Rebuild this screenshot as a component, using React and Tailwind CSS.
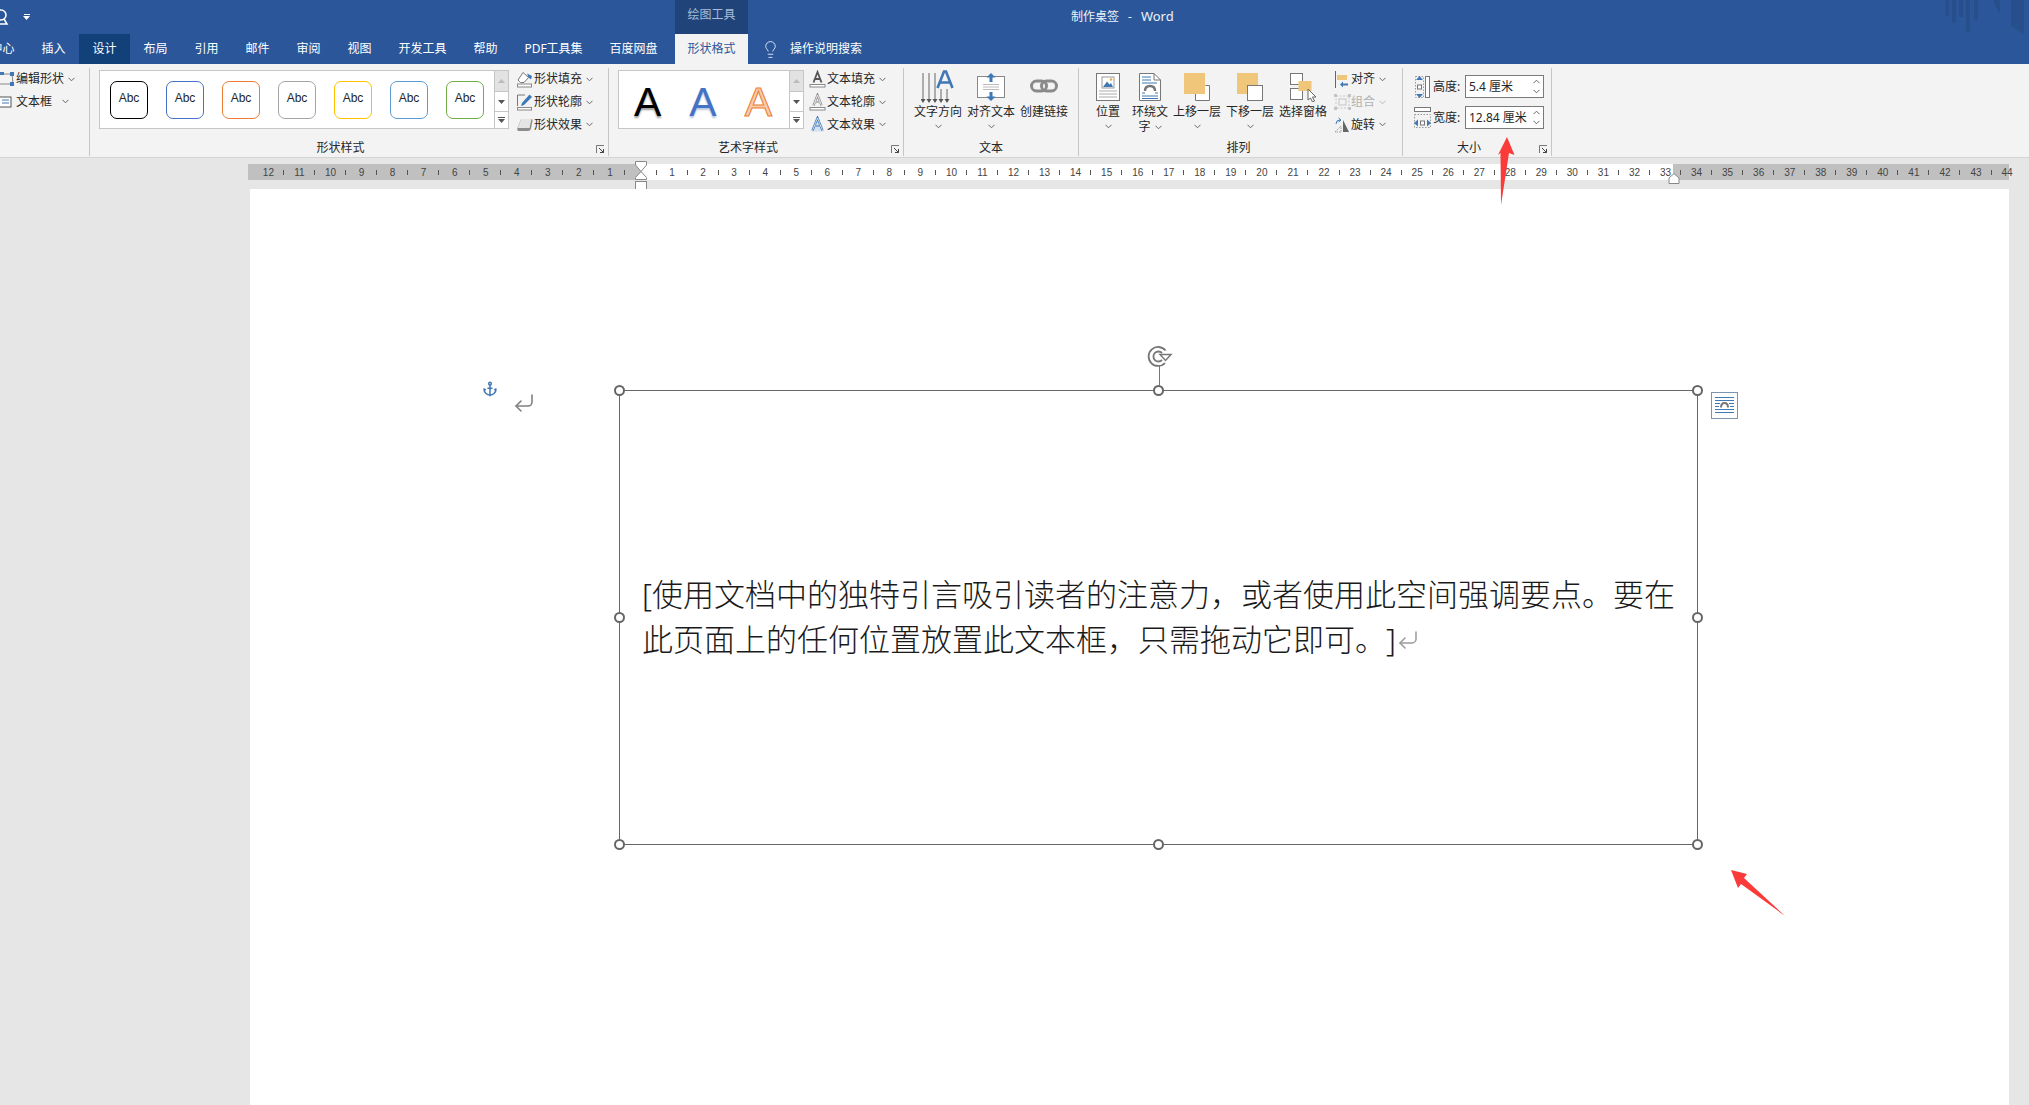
import { Anchor, CornerDownLeft, Lightbulb } from 'lucide-react'

const tabs = [
  { label: '中心', w: 'w-[51px]' },
  { label: '插入', w: 'w-[51px]' },
  { label: '设计', w: 'w-[51px]', active: true },
  { label: '布局', w: 'w-[51px]' },
  { label: '引用', w: 'w-[51px]' },
  { label: '邮件', w: 'w-[51px]' },
  { label: '审阅', w: 'w-[51px]' },
  { label: '视图', w: 'w-[51px]' },
  { label: '开发工具', w: 'w-[75px]' },
  { label: '帮助', w: 'w-[51px]' },
  { label: 'PDF工具集', w: 'w-[85px]' },
  { label: '百度网盘', w: 'w-[75px]' },
]

const shapeColors = ['border-black', 'border-[#4472c4]', 'border-[#ed7d31]', 'border-[#a5a5a5]', 'border-[#ffc000]', 'border-[#5b9bd5]', 'border-[#70ad47]']

const cm = Array.from({ length: 57 }, (_, i) => i - 12)

function Chevron({ className = '' }) {
  return (
    <svg width="7" height="5" viewBox="0 0 7 5" className={className}>
      <polyline points="0.5,0.8 3.5,3.8 6.5,0.8" fill="none" stroke="#666" strokeWidth="1" />
    </svg>
  )
}

function Launcher({ className = '' }) {
  return (
    <svg width="9" height="9" viewBox="0 0 9 9" className={`absolute ${className}`}>
      <path d="M0.5 8V0.5H8" fill="none" stroke="#777" />
      <path d="M3 3L7.5 7.5M7.5 4V7.5H4" fill="none" stroke="#444" />
    </svg>
  )
}

function Triangle({ up, color = '#555' }) {
  return (
    <svg width="7" height="4" viewBox="0 0 7 4">
      <polygon points={up ? '0,4 7,4 3.5,0' : '0,0 7,0 3.5,4'} fill={color} />
    </svg>
  )
}

function GalleryScroll() {
  return (
    <div className="w-[14px] h-full border-l border-[#c6c6c6] flex flex-col">
      <div className="h-[21px] bg-[#e2e2e2] flex items-center justify-center border-b border-[#c6c6c6]"><Triangle up color="#bbb" /></div>
      <div className="h-[20px] flex items-center justify-center border-b border-[#c6c6c6]"><Triangle /></div>
      <div className="flex-1 flex flex-col items-center justify-center gap-px">
        <div className="w-[7px] h-px bg-[#555]" />
        <Triangle />
      </div>
    </div>
  )
}

function MenuRow({ icon, label, disabled }) {
  return (
    <div className="h-[22.7px] flex items-center">
      <span className="w-[18px] h-[18px] flex items-center justify-center shrink-0">{icon}</span>
      <span className={`whitespace-nowrap ${disabled ? 'text-[#b1b1b1]' : ''}`}>{label}</span>
      <Chevron className={`ml-[4px] shrink-0 ${disabled ? 'opacity-40' : ''}`} />
    </div>
  )
}

function BigButton({ icon, w, children, chevron = true }) {
  return (
    <div className={`${w} flex flex-col items-center shrink-0`}>
      <div className="h-[34px] mt-[2px] flex items-center justify-center">{icon}</div>
      <div className="h-[16px] leading-[16px] whitespace-nowrap">{children}</div>
      {chevron && <div className="h-[13px] flex items-center"><Chevron /></div>}
    </div>
  )
}

function Group({ w, label, labelClass = '', className = '', launcher, children }) {
  return (
    <div className={`${w} relative my-1 h-[88px] border-r border-[#c6c6c6] shrink-0`}>
      <div className={`h-[72px] flex ${className}`}>{children}</div>
      <div className={`h-[16px] leading-[16px] text-center ${labelClass}`}>{label}</div>
      {launcher && <Launcher className="right-[3px] bottom-[2px]" />}
    </div>
  )
}

function FillIcon() {
  return (
    <svg width="18" height="17" viewBox="0 0 18 17">
      <rect x="1.5" y="13" width="14" height="3" fill="#fff" stroke="#888" />
      <path d="M7 1.5L12.5 6.5L8 11.5H4.5L2 9Z" fill="#fff" stroke="#777" />
      <path d="M11 2.5L16 5L15 8.5L12.5 6.5Z" fill="#3c78b5" />
    </svg>
  )
}

function OutlineIcon() {
  return (
    <svg width="18" height="18" viewBox="0 0 18 18">
      <path d="M9 2H1.5V13" fill="none" stroke="#777" />
      <rect x="1.5" y="14.5" width="14" height="2.5" fill="#fff" stroke="#888" />
      <path d="M13.5 1.5L16 4L8 12L5 13L6 10Z" fill="#3c78b5" />
    </svg>
  )
}

function EffectIcon() {
  return (
    <svg width="18" height="16" viewBox="0 0 18 16">
      <path d="M5 2H15.5Q17 2 16.5 4L15 11.5Q14.5 14 12 14H3Q0.5 14 1.5 11Z" fill="#8c8c8c" />
      <path d="M5 2H15.5L13.5 11H1.8Z" fill="#e4e4e4" />
    </svg>
  )
}

// the A of the three text menu rows: fill, outline, effect
function TextAIcon({ kind }) {
  const a = 'M4.5 12.5L8.5 2L12.5 12.5M5.8 9H11.2'
  if (kind === 'effect') {
    return (
      <svg width="18" height="18" viewBox="0 0 18 18">
        <path d="M2 15.5L8.5 1.5L15 15.5Z" fill="#d3e2f1" />
        <path d="M3.5 14.5L8.5 2L13.5 14.5M5.2 10H11.8" fill="none" stroke="#3f78b5" strokeWidth="2.2" />
        <path d="M3.5 14.5L8.5 2L13.5 14.5M5.2 10H11.8" fill="none" stroke="#fff" strokeWidth="0.7" />
      </svg>
    )
  }
  return (
    <svg width="18" height="18" viewBox="0 0 18 18">
      <path d={a} fill="none" stroke={kind === 'fill' ? '#555' : '#888'} strokeWidth={kind === 'fill' ? 1.8 : 2.2} />
      {kind === 'outline' && <path d={a} fill="none" stroke="#fff" strokeWidth="0.8" />}
      <rect x="1" y="14.5" width="15" height="2.5" fill="#fff" stroke="#888" />
    </svg>
  )
}

function DirectionIcon() {
  return (
    <svg width="34" height="34" viewBox="0 0 34 34">
      {[2, 8, 14, 20, 26].map((x, i) => (
        <g key={x}>
          <line x1={x} y1={i > 2 ? 19 : 3} x2={x} y2={31} stroke="#666" />
          <polygon points={`${x - 2.5},29 ${x + 2.5},29 ${x},33`} fill="#555" />
        </g>
      ))}
      <path d="M16.5 18L23 1.5H25L31.5 18M19 12.5H29" fill="none" stroke="#3f78b5" strokeWidth="2.6" />
    </svg>
  )
}

function AlignIcon() {
  return (
    <svg width="28" height="28" viewBox="0 0 28 28">
      <rect x="0.5" y="3.5" width="27" height="21" fill="#fff" stroke="#888" />
      <rect x="7" y="0" width="14" height="3" fill="#f3f3f3" />
      <rect x="7" y="25" width="14" height="3" fill="#f3f3f3" />
      <path d="M6 11.5H22M6 14H22M6 16.5H22" stroke="#bbb" />
      <path d="M14 0L18.5 4.5H15.5V9H12.5V4.5H9.5ZM14 28L18.5 23.5H15.5V19H12.5V23.5H9.5Z" fill="#3f78b5" />
    </svg>
  )
}

function LinkIcon() {
  return (
    <svg width="28" height="16" viewBox="0 0 28 16">
      <rect x="1.5" y="2" width="15" height="10" rx="5" fill="none" stroke="#8a8a8a" strokeWidth="3" />
      <rect x="11.5" y="2" width="15" height="10" rx="5" fill="none" stroke="#8a8a8a" strokeWidth="3" />
    </svg>
  )
}

function PositionIcon() {
  return (
    <svg width="24" height="28" viewBox="0 0 24 28">
      <rect x="0.5" y="0.5" width="23" height="27" fill="#fff" stroke="#777" />
      <rect x="6" y="4" width="12" height="11" fill="#fff" stroke="#999" />
      <path d="M7 14L11 8.5L13.5 11.5L15 10L17 14Z" fill="#3f78b5" />
      <circle cx="15" cy="6.5" r="1.2" fill="#eba83a" />
      <path d="M3 18H21M3 21H21M3 24H21" stroke="#aaa" />
    </svg>
  )
}

function WrapIcon() {
  return (
    <svg width="22" height="28" viewBox="0 0 22 28">
      <path d="M0.5 0.5H15L21.5 7V27.5H0.5Z" fill="#fff" stroke="#777" />
      <path d="M15 0.5V7H21.5" fill="none" stroke="#777" />
      <path d="M3 4H12M3 7H12M3 10H18M3 20H6M16 20H19M3 23H19M3 25.5H19" stroke="#3f78b5" />
      <path d="M6 18Q6 13 11 13Q16 13 16 18" fill="none" stroke="#777" strokeWidth="2.5" />
    </svg>
  )
}

function ForwardIcon() {
  return (
    <svg width="26" height="28" viewBox="0 0 26 28">
      <path d="M21.5 12.5H25.5V27.5H11.5V21" fill="#fff" stroke="#777" />
      <rect x="0" y="0" width="21" height="21" fill="#efc67a" />
    </svg>
  )
}

function BackwardIcon() {
  return (
    <svg width="26" height="28" viewBox="0 0 26 28">
      <rect x="0" y="0" width="21" height="21" fill="#efc67a" />
      <rect x="10.5" y="12.5" width="15" height="15" fill="#fff" stroke="#777" />
    </svg>
  )
}

function PaneIcon() {
  return (
    <svg width="27" height="29" viewBox="0 0 27 29">
      <rect x="0.5" y="0.5" width="12" height="11" fill="#fff" stroke="#777" />
      <rect x="0.5" y="15.5" width="12" height="11" fill="#fff" stroke="#777" />
      <rect x="8.5" y="8" width="13" height="10" fill="#efc67a" />
      <path d="M18 16V27L20.5 25L22.5 29L24.5 28L22.5 24H26Z" fill="#fff" stroke="#666" />
    </svg>
  )
}

function AlignMenuIcon() {
  return (
    <svg width="14" height="17" viewBox="0 0 14 17">
      <line x1="0.5" y1="0" x2="0.5" y2="17" stroke="#666" />
      <rect x="2" y="4" width="10" height="5" fill="#efc67a" />
      <path d="M5 13.5L8 10.5V12.5H13V14.5H8V16.5Z" fill="#3f78b5" />
    </svg>
  )
}

function GroupIcon() {
  return (
    <svg width="17" height="16" viewBox="0 0 17 16">
      <rect x="2" y="2" width="13" height="12" fill="none" stroke="#c4c4c4" strokeDasharray="2 1.5" />
      <rect x="5" y="5" width="7" height="6" fill="none" stroke="#c4c4c4" />
      {[[0, 0], [14, 0], [0, 13], [14, 13]].map(([x, y]) => <rect key={`${x}${y}`} x={x} y={y} width="3" height="3" fill="#c4c4c4" />)}
    </svg>
  )
}

function RotateIcon() {
  return (
    <svg width="17" height="16" viewBox="0 0 17 16">
      <path d="M1 15L7 9V15Z" fill="none" stroke="#999" strokeDasharray="1.5 1" />
      <path d="M9 15V3L15 15Z" fill="#666" />
      <path d="M2 7Q2 3 6 3M4.5 1L7 3L4.5 5" fill="none" stroke="#3f78b5" />
    </svg>
  )
}

function HeightIcon() {
  return (
    <svg width="17" height="22" viewBox="0 0 17 22">
      <rect x="11.5" y="0.5" width="4" height="21" fill="#fff" stroke="#777" />
      <rect x="1.5" y="0.5" width="8" height="21" fill="none" stroke="#999" strokeDasharray="1.5 1.5" />
      <path d="M5.5 0L9 4H2ZM5.5 22L9 18H2Z" fill="#3f78b5" />
      <rect x="3.5" y="9" width="4" height="4" fill="#fff" stroke="#777" />
    </svg>
  )
}

function WidthIcon() {
  return (
    <svg width="17" height="22" viewBox="0 0 17 22">
      <rect x="0.5" y="0.5" width="16" height="4" fill="#fff" stroke="#777" />
      <rect x="0.5" y="7.5" width="16" height="13" fill="none" stroke="#999" strokeDasharray="1.5 1.5" />
      <path d="M0 16L4 12.5V19.5ZM17 16L13 12.5V19.5Z" fill="#3f78b5" />
      <rect x="6.5" y="14" width="4" height="4" fill="#fff" stroke="#777" />
    </svg>
  )
}

function SizeField({ icon, label, value }) {
  return (
    <div className="h-[23px] flex items-center">
      <span className="w-[17px] h-[22px] shrink-0">{icon}</span>
      <span className="ml-[2px] w-[32px] shrink-0 whitespace-nowrap">{label}</span>
      <div className="w-[79px] h-[23px] bg-white border border-[#7a7a7a] flex items-center pl-[3px]">
        <span className="whitespace-nowrap">{value}</span>
        <div className="ml-auto mr-[3px] flex flex-col gap-[5px]">
          <Chevron className="rotate-180" />
          <Chevron />
        </div>
      </div>
    </div>
  )
}

function Handle({ className }) {
  return <span className={`absolute w-[11px] h-[11px] rounded-full bg-white border-2 border-[#666] ${className}`} />
}

export default function App() {
  return (
    <div className="w-[2029px] h-[1105px] overflow-hidden bg-[#e6e6e6] text-[12px] text-[#262626] font-['Noto_Sans','Noto_Sans_CJK_SC',sans-serif]">
      {/* title bar */}
      <div className="relative h-[34px] bg-[#2b579a] flex">
        <div className="w-[675px] h-full relative">
          <svg width="12" height="18" viewBox="0 0 12 18" className="absolute left-[-3px] top-[9px]">
            <circle cx="4" cy="6" r="5" fill="none" stroke="#fff" strokeWidth="1.5" />
            <path d="M7 10L10 15H0" fill="none" stroke="#fff" strokeWidth="1.5" />
          </svg>
          <div className="absolute left-[23px] top-[14px] flex flex-col items-center gap-px">
            <div className="w-[6px] h-px bg-white" />
            <Triangle color="#fff" />
          </div>
        </div>
        <div className="w-[73px] h-full bg-[#204479] text-[#a9bcd6] flex items-center justify-center pb-[4px]">绘图工具</div>
        <div className="ml-[323px] h-full flex items-center pb-[1px] text-[#eef2f8] whitespace-nowrap">
          <span>制作桌签</span>
          <span className="mx-[9px]">-</span>
          <span className="text-[13px]">Word</span>
        </div>
        <svg width="99" height="40" viewBox="0 0 99 40" className="absolute right-0 top-0">
          <g fill="#274f8c">
            <rect x="15" y="0" width="4" height="16" />
            <rect x="22" y="0" width="4" height="23" />
            <rect x="29" y="0" width="4" height="17" />
            <rect x="36" y="0" width="4" height="32" />
            <rect x="44" y="0" width="4" height="20" />
            <polygon points="64,0 70,0 70,14 64,4" />
            <polygon points="81,0 94,0 94,34 81,26" />
          </g>
        </svg>
      </div>

      {/* tabs */}
      <div className="h-[30px] bg-[#2b579a] flex text-white overflow-hidden">
        <div className="ml-[-23px] flex">
          {tabs.map(tab => (
            <div key={tab.label} className={`${tab.w} h-full flex items-center justify-center whitespace-nowrap ${tab.active ? 'bg-[#124078]' : ''}`}>{tab.label}</div>
          ))}
        </div>
        <div className="ml-[4px] w-[73px] h-full bg-[#f3f3f3] text-[#2b579a] flex items-center justify-center">形状格式</div>
        <Lightbulb size={19} strokeWidth={1} className="ml-[13px] self-center" />
        <span className="ml-[10px] self-center whitespace-nowrap">操作说明搜索</span>
      </div>

      {/* ribbon */}
      <div className="h-[94px] bg-[#f3f3f3] border-b border-[#d4d4d4] flex">
        <Group w="w-[90px]" label="" className="flex-col">
          <div className="h-[22.5px] flex items-center">
            <svg width="16" height="16" viewBox="0 0 16 16" className="shrink-0">
              <path d="M0 3H12L13 13H0" fill="none" stroke="#888" />
              <rect x="0" y="1" width="4" height="3" fill="#3f78b5" />
              <rect x="10" y="1" width="4" height="4" fill="#3f78b5" />
              <rect x="10" y="11" width="4" height="4" fill="#3f78b5" />
            </svg>
            <span className="whitespace-nowrap">编辑形状</span>
            <Chevron className="ml-[4px]" />
          </div>
          <div className="h-[22.5px] flex items-center">
            <svg width="16" height="14" viewBox="0 0 16 14" className="shrink-0">
              <rect x="-2" y="2" width="13" height="10" fill="#fff" stroke="#555" />
              <path d="M2 5H9M2 8H9" stroke="#3f78b5" />
            </svg>
            <span className="whitespace-nowrap">文本框</span>
            <Chevron className="ml-[10px]" />
          </div>
        </Group>

        <Group w="w-[519px]" label="形状样式" labelClass="pr-[17px]" className="pl-[9px]" launcher>
          <div className="mt-[2px] w-[410px] h-[59px] bg-white border border-[#c6c6c6] flex">
            <div className="flex-1 flex items-center pl-[10px] gap-[18px]">
              {shapeColors.map(color => (
                <div key={color} className={`w-[38px] h-[38px] rounded-[7px] border ${color} flex items-center justify-center pb-[3px] text-[12px] font-['Liberation_Sans',sans-serif]`}>Abc</div>
              ))}
            </div>
            <GalleryScroll />
          </div>
          <div className="ml-[7px] flex flex-col">
            <MenuRow icon={<FillIcon />} label="形状填充" />
            <MenuRow icon={<OutlineIcon />} label="形状轮廓" />
            <MenuRow icon={<EffectIcon />} label="形状效果" />
          </div>
        </Group>

        <Group w="w-[295px]" label="艺术字样式" labelClass="pr-[16px]" className="pl-[9px]" launcher>
          <div className="mt-[2px] w-[186px] h-[59px] bg-white border border-[#c6c6c6] flex">
            <div className="flex-1 flex items-center justify-around pl-px pr-[3px] pt-[6px] text-[41px] font-['Liberation_Sans',sans-serif]">
              <span className="text-black [text-shadow:0_2px_2px_#9a9a9a]">A</span>
              <span className="text-[#4472c4] [text-shadow:0_2px_2px_#b9c6e0]">A</span>
              <span className="text-[#f8cbad] [-webkit-text-stroke:1px_#ed7d31]">A</span>
            </div>
            <GalleryScroll />
          </div>
          <div className="ml-[5px] flex flex-col">
            <MenuRow icon={<TextAIcon kind="fill" />} label="文本填充" />
            <MenuRow icon={<TextAIcon kind="outline" />} label="文本轮廓" />
            <MenuRow icon={<TextAIcon kind="effect" />} label="文本效果" />
          </div>
        </Group>

        <Group w="w-[175px]" label="文本" className="pl-[7.5px]">
          <BigButton w="w-[53px]" icon={<DirectionIcon />}>文字方向</BigButton>
          <BigButton w="w-[53px]" icon={<AlignIcon />}>对齐文本</BigButton>
          <BigButton w="w-[53px]" icon={<LinkIcon />} chevron={false}>创建链接</BigButton>
        </Group>

        <Group w="w-[324px]" label="排列" labelClass="pr-[4px]" className="pl-[7px]">
          <BigButton w="w-[44px]" icon={<PositionIcon />}>位置</BigButton>
          <BigButton w="w-[40px]" icon={<WrapIcon />} chevron={false}>
            <div className="w-[36px] text-center leading-[15px] whitespace-normal">环绕文字<Chevron className="inline ml-[4px] align-middle" /></div>
          </BigButton>
          <BigButton w="w-[54px]" icon={<ForwardIcon />}>上移一层</BigButton>
          <BigButton w="w-[52px]" icon={<BackwardIcon />}>下移一层</BigButton>
          <BigButton w="w-[54px]" icon={<PaneIcon />} chevron={false}>选择窗格</BigButton>
          <div className="ml-[3px] flex flex-col">
            <MenuRow icon={<AlignMenuIcon />} label="对齐" />
            <MenuRow icon={<GroupIcon />} label="组合" disabled />
            <MenuRow icon={<RotateIcon />} label="旋转" />
          </div>
        </Group>

        <Group w="w-[149px]" label="大小" labelClass="pr-[16px]" className="pl-[11px] pt-[7px] flex-col gap-[8px]" launcher>
          <SizeField icon={<HeightIcon />} label="高度:" value="5.4 厘米" />
          <SizeField icon={<WidthIcon />} label="宽度:" value="12.84 厘米" />
        </Group>
      </div>

      {/* ruler */}
      <div className="relative ml-[248px] mt-[6px] w-[1761px] h-[16px]">
        <div className="h-full flex pl-[4.9px] text-[10px] text-[#444] font-['Liberation_Sans',sans-serif] bg-[linear-gradient(90deg,#c0c0c0_393px,#fff_393px,#fff_1425px,#c0c0c0_1425px)]">
          {cm.map(n => (
            <span key={n} className="relative w-[31.05px] shrink-0 text-center leading-[17px]">
              {n === 0 ? '' : Math.abs(n)}
              {n < 44 && <i className="absolute right-0 top-[6px] w-px h-[5px] bg-[#555]" />}
            </span>
          ))}
        </div>
        <svg width="14" height="30" viewBox="0 0 14 30" className="absolute left-[386px] top-[-3px]">
          <path d="M1.5 0.5H12.5V4L7 10.5L1.5 4Z" fill="#fff" stroke="#888" />
          <path d="M7 10.5L12.5 16.5V18.5H1.5V16.5Z" fill="#fff" stroke="#888" />
          <rect x="1.5" y="20.5" width="11" height="8" fill="#fff" stroke="#888" />
        </svg>
        <svg width="12" height="11" viewBox="0 0 12 11" className="absolute left-[1420px] top-[9px]">
          <path d="M6 0.5L11 5V10.5H1V5Z" fill="#fff" stroke="#888" />
        </svg>
      </div>

      {/* page */}
      <div className="relative ml-[250px] mt-[9px] w-[1759px] h-[916px] bg-white pt-[201px] pl-[369px]">
        <Anchor size={16} strokeWidth={2.25} className="absolute left-[232px] top-[192px] text-[#3f78b5]" />
        <CornerDownLeft size={24} strokeWidth={1.6} className="absolute left-[262px] top-[202px] text-[#808080]" />

        <div className="relative w-[1079px] h-[455px] border-[1.5px] border-[#666] flex items-center pl-[22px] pr-[2px] pb-[2px] text-[31px] leading-[45px] text-[#1a1a1a] font-light [text-spacing-trim:space-all]">
          <p>
            [使用文档中的独特引言吸引读者的注意力，或者使用此空间强调要点。要在此页面上的任何位置放置此文本框，只需拖动它即可。]
            <CornerDownLeft size={24} strokeWidth={1.5} className="inline text-[#9a9a9a] align-[-1px]" />
          </p>

          <Handle className="left-[-6px] top-[-6px]" />
          <Handle className="left-1/2 ml-[-6px] top-[-6px]" />
          <Handle className="right-[-6px] top-[-6px]" />
          <Handle className="left-[-6px] top-1/2 mt-[-6px]" />
          <Handle className="right-[-6px] top-1/2 mt-[-6px]" />
          <Handle className="left-[-6px] bottom-[-6px]" />
          <Handle className="left-1/2 ml-[-6px] bottom-[-6px]" />
          <Handle className="right-[-6px] bottom-[-6px]" />

          <span className="absolute left-1/2 top-[-25px] w-px h-[20px] bg-[#777]" />
          <svg width="26" height="24" viewBox="0 0 26 24" className="absolute left-[527px] top-[-46px]">
            <path d="M18.5 5.5A9.5 9.5 0 1 0 18 18" fill="none" stroke="#777" strokeWidth="1.8" />
            <path d="M15 8A5 5 0 1 0 15 15" fill="none" stroke="#777" strokeWidth="1.8" />
            <path d="M13 9.5H24L18.5 15.5Z" fill="none" stroke="#777" strokeWidth="1.5" />
          </svg>

          <div className="absolute left-full top-[1px] ml-[14px] w-[27px] h-[27px] border border-[#7f93ad] bg-white flex items-center justify-center">
            <svg width="19" height="20" viewBox="0 0 19 20">
              <path d="M0 1.5H19M0 4.5H19M0 7.5H5M14 7.5H19M0 10.5H4M15 10.5H19M0 13.5H19M0 16.5H19" stroke="#3f78b5" />
              <path d="M6 11.5Q6 7 9.5 7Q13 7 13 11.5" fill="none" stroke="#777" strokeWidth="2" />
            </svg>
          </div>
        </div>

        <svg width="20" height="70" viewBox="0 0 20 70" className="absolute left-[1247px] top-[-52px]">
          <polygon points="10,0 17.5,18 12,16 4,68 3.5,16 1,18" fill="#fb3a3a" />
        </svg>
        <svg width="56" height="46" viewBox="0 0 56 46" className="absolute left-[1481px] top-[681px]">
          <polygon points="0,0 16,4 13,8 54,46 10,14 7,18" fill="#fb3a3a" />
        </svg>
      </div>
    </div>
  )
}
